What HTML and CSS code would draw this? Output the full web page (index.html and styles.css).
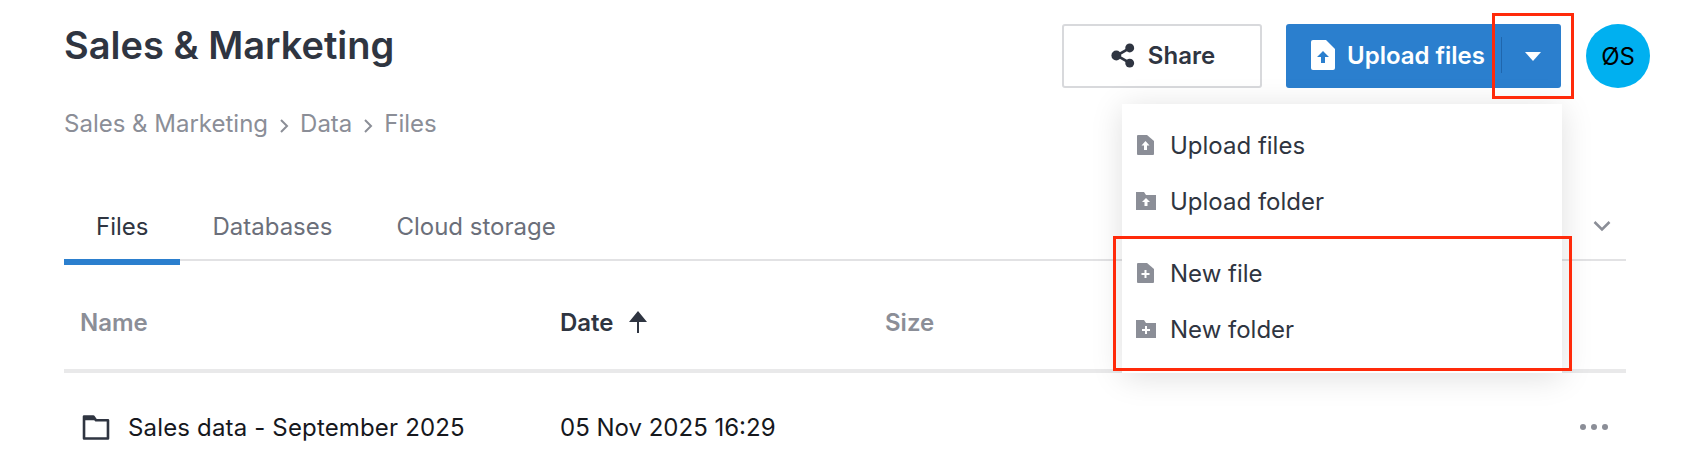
FILE: index.html
```html
<!DOCTYPE html>
<html lang="en">
<head>
  <meta charset="UTF-8">
  <meta name="viewport" content="width=device-width, initial-scale=1.0">
  <title>Sales &amp; Marketing</title>
  <link rel="stylesheet" href="styles.css">
</head>
<body>
  <div class="page">
    <div class="topbar">
      <div class="heading">
        <h1 class="title">Sales &amp; Marketing</h1>
        <div class="crumbs">
          <span>Sales &amp; Marketing</span>
          <svg class="crumb-sep" viewBox="0 0 10 16"><path d="M2 2l6 6-6 6" fill="none" stroke="currentColor" stroke-width="2"/></svg>
          <span>Data</span>
          <svg class="crumb-sep" viewBox="0 0 10 16"><path d="M2 2l6 6-6 6" fill="none" stroke="currentColor" stroke-width="2"/></svg>
          <span>Files</span>
        </div>
      </div>
      <div class="actions">
        <button class="btn-share">
          <svg class="share-icon" viewBox="0 0 26 28">
            <path d="M20 6L6 14l14 8" fill="none" stroke="#2f3541" stroke-width="3"/>
            <circle cx="20.500" cy="5.500" r="5" fill="#2f3541"/>
            <circle cx="5.500" cy="14" r="5.500" fill="#2f3541"/>
            <circle cx="20.500" cy="22.500" r="5" fill="#2f3541"/>
          </svg>
          Share
        </button>
        <div class="btn-upload">
          <svg class="upload-icon" viewBox="0 0 24 30">
            <path d="M2 0h13l9 9v19a2 2 0 0 1-2 2H2a2 2 0 0 1-2-2V2a2 2 0 0 1 2-2z" fill="#fff"/>
            <path d="M12 11l6 6h-4v6h-4v-6H6z" fill="#2b7fce"/>
          </svg>
          <span class="upload-label">Upload files</span>
          <span class="upload-sep"></span>
          <span class="caret"></span>
        </div>
        <div class="avatar">ØS</div>
      </div>
    </div>

    <div class="tabs">
      <div class="tab tab-active">Files</div>
      <div class="tab">Databases</div>
      <div class="tab">Cloud storage</div>
      <svg class="tabs-more" viewBox="0 0 18 12"><path d="M1.500 2L9 9.500 16.500 2" fill="none" stroke="#8b8e97" stroke-width="2.500"/></svg>
    </div>

    <div class="table-head">
      <div class="col-name">Name</div>
      <div class="col-date">Date
        <svg class="sort-arrow" viewBox="0 0 20 22"><path d="M10 0l9 11h-8v11H9V11H1z" fill="#2f3541"/></svg>
      </div>
      <div class="col-size">Size</div>
    </div>

    <div class="table-row">
      <div class="row-name">
        <svg class="folder-icon" viewBox="0 0 26 24">
          <path d="M1.500 1.500h9l2.500 3.500h11.500v17.500h-23z" fill="none" stroke="#2f3541" stroke-width="2.500" stroke-linejoin="round"/>
          <path d="M1 1h9l3 4H1z" fill="#2f3541"/>
        </svg>
        Sales data - September 2025
      </div>
      <div class="row-date">05 Nov 2025 16:29</div>
      <div class="row-more"><span class="dot"></span><span class="dot"></span><span class="dot"></span></div>
    </div>
  </div>

  <div class="menu">
    <div class="menu-group">
      <div class="menu-item">
        <span class="menu-icon">
          <svg viewBox="0 0 20 20"><path d="M2 0h9l7 6v13a1 1 0 0 1-1 1H2a1 1 0 0 1-1-1V1a1 1 0 0 1 1-1z" fill="#8b8e97"/><path d="M9.500 6l4 4.500H11V15H8v-4.500H5.500z" fill="#fff"/></svg>
        </span>
        Upload files
      </div>
      <div class="menu-item">
        <span class="menu-icon">
          <svg viewBox="0 0 20 20"><path d="M0 1h8l2 3h10v15H0z" fill="#8b8e97"/><path d="M10 7l4 4h-2.500v4h-3v-4H6z" fill="#fff"/></svg>
        </span>
        Upload folder
      </div>
    </div>
    <div class="menu-group">
      <div class="menu-item">
        <span class="menu-icon">
          <svg viewBox="0 0 20 20"><path d="M2 0h9l7 6v13a1 1 0 0 1-1 1H2a1 1 0 0 1-1-1V1a1 1 0 0 1 1-1z" fill="#8b8e97"/><path d="M8.500 7h2v3h3v2h-3v3h-2v-3h-3v-2h3z" fill="#fff"/></svg>
        </span>
        New file
      </div>
      <div class="menu-item">
        <span class="menu-icon">
          <svg viewBox="0 0 20 20"><path d="M0 1h8l2 3h10v15H0z" fill="#8b8e97"/><path d="M9 7h2v3h3v2h-3v3H9v-3H6v-2h3z" fill="#fff"/></svg>
        </span>
        New folder
      </div>
    </div>
  </div>

  <div class="mark mark-caret"></div>
  <div class="mark mark-menu"></div>
</body>
</html>
```

FILE: styles.css
```css
* {
  box-sizing: border-box;
}
html, body {
  margin: 0;
  height: 468px;
  overflow: hidden;
  background: #fff;
}
body {
  font-family: Inter, "Liberation Sans", sans-serif;
  color: #2f3541;
  position: relative;
}
.page {
  padding: 24px 40px 0 64px;
}
.topbar {
  display: flex;
  justify-content: space-between;
  height: 189px;
}
.title {
  margin: 0;
  font-size: 38px;
  font-weight: 600;
  line-height: 42px;
}
.crumbs {
  display: flex;
  align-items: center;
  gap: 11px;
  margin-top: 44px;
  font-size: 24px;
  line-height: 28px;
  color: #8b8e97;
}
.crumb-sep {
  width: 10px;
  height: 16px;
  margin-top: 3px;
}
.actions {
  display: flex;
  align-items: flex-start;
}
.btn-share {
  display: flex;
  align-items: center;
  justify-content: center;
  gap: 13px;
  width: 200px;
  height: 64px;
  padding: 0 0 2px 2px;
  border: 2px solid #d8d9dc;
  border-radius: 3px;
  background: #fff;
  color: #2f3541;
  font: 600 24px Inter, sans-serif;
}
.share-icon {
  width: 24px;
  height: 25px;
}
.btn-upload {
  display: flex;
  align-items: center;
  width: 275px;
  height: 64px;
  margin-left: 24px;
  padding-left: 25px;
  padding-bottom: 2px;
  border-radius: 3px;
  background: #2b7fce;
  color: #fff;
  font-size: 24px;
  font-weight: 600;
}
.upload-icon {
  width: 24px;
  height: 30px;
}
.upload-label {
  margin-left: 12px;
}
.upload-sep {
  width: 1px;
  height: 36px;
  margin-left: 16px;
  background: #1f66ad;
}
.caret {
  margin-left: 23px;
  margin-top: 2px;
  border-left: 8px solid transparent;
  border-right: 8px solid transparent;
  border-top: 9px solid #fff;
}
.avatar {
  display: flex;
  align-items: center;
  justify-content: center;
  width: 64px;
  height: 64px;
  margin-left: 25px;
  border-radius: 50%;
  background: #00b0f0;
  color: #000;
  font-size: 24px;
}
.tabs {
  display: flex;
  position: relative;
  height: 48px;
  margin-right: 24px;
  border-bottom: 2px solid #e2e2e4;
  font-size: 24px;
  color: #6b6f7a;
}
.tab {
  height: 52px;
  padding: 0 32px;
  line-height: 28px;
}
.tab-active {
  color: #2f3541;
  border-bottom: 6px solid #2b7fce;
}
.tabs-more {
  position: absolute;
  right: 15px;
  top: 7px;
  width: 18px;
  height: 12px;
}
.table-head {
  display: flex;
  align-items: center;
  height: 112px;
  margin-right: 24px;
  padding-top: 14px;
  border-bottom: 4px solid #e9e9ea;
  font-size: 24px;
  font-weight: 600;
  color: #8b8e97;
}
.col-name {
  width: 496px;
  padding-left: 16px;
}
.col-date {
  display: flex;
  align-items: center;
  gap: 14px;
  width: 325px;
  color: #2f3541;
}
.sort-arrow {
  width: 20px;
  height: 22px;
}
.table-row {
  display: flex;
  align-items: center;
  height: 108px;
  margin-right: 24px;
  font-size: 24px;
  color: #16181d;
}
.row-name {
  display: flex;
  align-items: center;
  gap: 18px;
  width: 496px;
  padding-left: 18px;
  letter-spacing: 0.16px;
}
.folder-icon {
  width: 28px;
  height: 25px;
}
.row-date {
  flex: 1;
}
.row-more {
  display: flex;
  gap: 5px;
  margin-right: 18px;
}
.dot {
  width: 6px;
  height: 6px;
  border-radius: 50%;
  background: #8b8e97;
}
.menu {
  position: absolute;
  left: 1122px;
  top: 104px;
  width: 440px;
  height: 269px;
  padding-top: 13px;
  background: #fff;
  box-shadow: 0 4px 30px rgba(0, 0, 0, 0.13);
  font-size: 24px;
  color: #2f3541;
}
.menu-group + .menu-group {
  margin-top: 16px;
}
.menu-item {
  display: flex;
  align-items: center;
  height: 56px;
  padding-left: 14px;
}
.menu-icon {
  display: flex;
  width: 20px;
  height: 20px;
  margin-right: 14px;
}
.mark {
  position: absolute;
  border: 3px solid #ff2a0a;
}
.mark-caret {
  left: 1492px;
  top: 13px;
  width: 82px;
  height: 86px;
}
.mark-menu {
  left: 1113px;
  top: 236px;
  width: 459px;
  height: 135px;
}
```
